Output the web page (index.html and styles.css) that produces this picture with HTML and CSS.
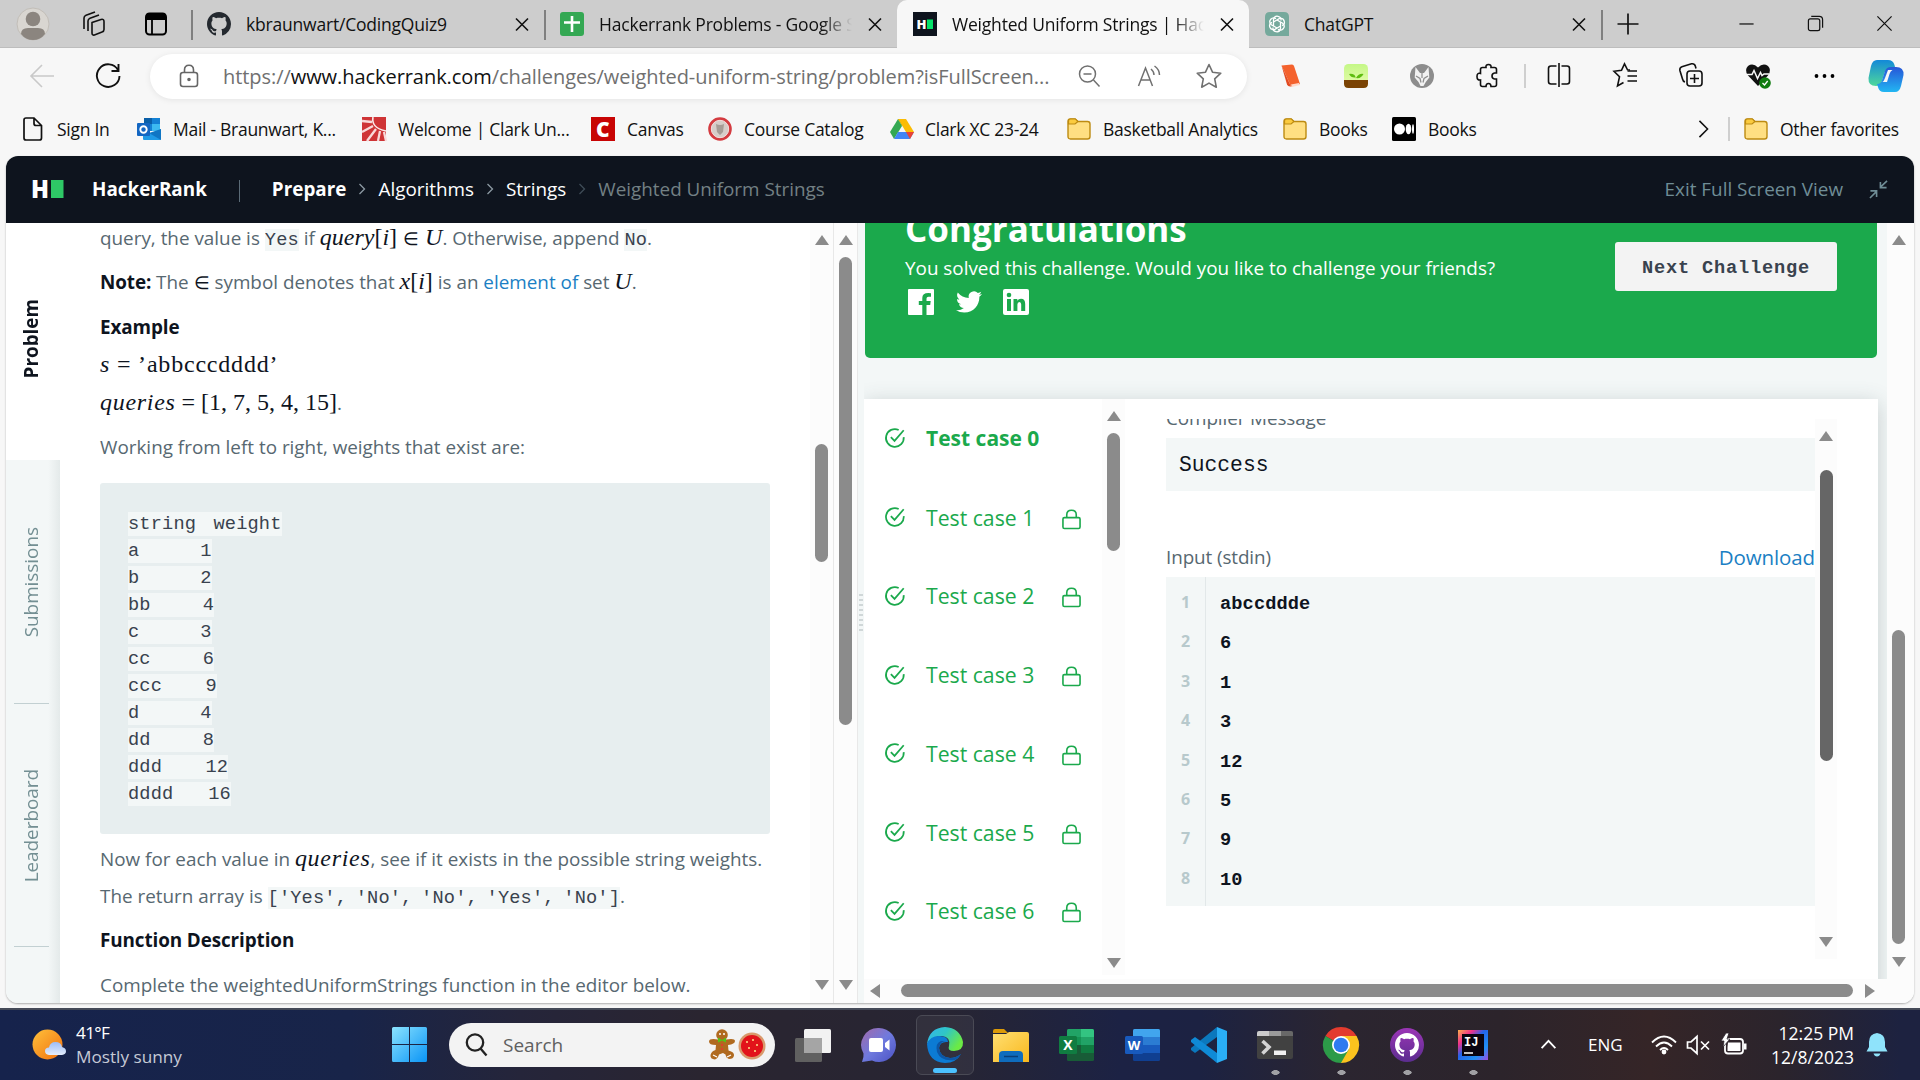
FILE: index.html
```html
<!DOCTYPE html>
<html lang="en">
<head>
<meta charset="utf-8">
<title>Weighted Uniform Strings | HackerRank</title>
<link rel="stylesheet" href="styles.css">
</head>
<body>
<svg class="defs" width="0" height="0">
  <defs>
    <linearGradient id="gWin" x1="0" y1="0" x2="1" y2="1"><stop offset="0" stop-color="#8be3ff"/><stop offset="1" stop-color="#0a94f5"/></linearGradient>
    <linearGradient id="gSun" x1="0" y1="0" x2="1" y2="1"><stop offset="0" stop-color="#ffc13b"/><stop offset="1" stop-color="#f0700f"/></linearGradient>
    <linearGradient id="gCloud" x1="0" y1="0" x2="0" y2="1"><stop offset="0" stop-color="#9dbdf5"/><stop offset="1" stop-color="#e3ecfc"/></linearGradient>
    <linearGradient id="gChat" x1="0" y1="0" x2="1" y2="1"><stop offset="0" stop-color="#a269a9"/><stop offset=".5" stop-color="#6f7ade"/><stop offset="1" stop-color="#4b52c4"/></linearGradient>
    <linearGradient id="gEdgeTop" x1="0" y1="0" x2="1" y2=".5"><stop offset="0" stop-color="#35b5ee"/><stop offset=".5" stop-color="#2fc6c6"/><stop offset="1" stop-color="#6bea45"/></linearGradient>
    <linearGradient id="gFolder" x1="0" y1="0" x2="1" y2="1"><stop offset="0" stop-color="#ffdf72"/><stop offset="1" stop-color="#f9b81d"/></linearGradient>
    <linearGradient id="gIj" x1="0" y1="0" x2="1" y2="1"><stop offset="0" stop-color="#fdb04a"/><stop offset=".25" stop-color="#f0318a"/><stop offset=".45" stop-color="#2563eb"/><stop offset=".75" stop-color="#1f8ff5"/><stop offset="1" stop-color="#a04be0"/></linearGradient>
    <linearGradient id="gCoA" x1="0" y1="0" x2="0" y2="1"><stop offset="0" stop-color="#1389d8"/><stop offset="1" stop-color="#4fd89b"/></linearGradient>
    <linearGradient id="gCoB" x1="0" y1="0" x2="0" y2="1"><stop offset="0" stop-color="#2756d8"/><stop offset="1" stop-color="#22b6f2"/></linearGradient>
    <linearGradient id="gPlant" x1="0" y1="0" x2="0" y2="1"><stop offset="0" stop-color="#c4f786"/><stop offset="1" stop-color="#eafcb0"/></linearGradient>
    <linearGradient id="gGh" x1="0" y1="0" x2="0" y2="1"><stop offset="0" stop-color="#9b35b6"/><stop offset="1" stop-color="#5b2d8f"/></linearGradient>
    <symbol id="octocat" viewBox="0 0 16 16"><path d="M8 0C3.58 0 0 3.58 0 8c0 3.54 2.29 6.53 5.47 7.59.4.07.55-.17.55-.38 0-.19-.01-.82-.01-1.49-2.01.37-2.53-.49-2.69-.94-.09-.23-.48-.94-.82-1.13-.28-.15-.68-.52-.01-.53.63-.01 1.08.58 1.23.82.72 1.21 1.87.87 2.33.66.07-.52.28-.87.51-1.07-1.78-.2-3.64-.89-3.64-3.95 0-.87.31-1.59.82-2.15-.08-.2-.36-1.02.08-2.12 0 0 .67-.21 2.2.82.64-.18 1.32-.27 2-.27.68 0 1.36.09 2 .27 1.53-1.04 2.2-.82 2.2-.82.44 1.1.16 1.92.08 2.12.51.56.82 1.27.82 2.15 0 3.07-1.87 3.75-3.65 3.95.29.25.54.73.54 1.48 0 1.07-.01 1.93-.01 2.2 0 .21.15.46.55.38A8.01 8.01 0 0 0 16 8c0-4.42-3.58-8-8-8z"/></symbol>
    <symbol id="close" viewBox="0 0 16 16"><path d="M2 2.500 14 14.500M14 2.500 2 14.500" fill="none" stroke="#111" stroke-width="1.600"/></symbol>
    <symbol id="folder" viewBox="0 0 24 24"><path d="M1 4.500Q1 2 3.500 2H8l3 2.500h9.500Q23 4.500 23 7v12.500Q23 22 20.500 22h-17Q1 22 1 19.500z" fill="#ffdf82" stroke="#bd8b12" stroke-width="1.400"/><path d="M1.500 7H8l3-2.500L8.500 2h-5Q1.500 2 1.500 4z" fill="#fbcb3f" stroke="#bd8b12" stroke-width="1.200"/></symbol>
    <symbol id="check" viewBox="0 0 24 24"><path d="M21.500 11A9.700 9.700 0 1 1 16 3.200M7.500 11l4 4.200L21.500 3.500" fill="none" stroke="#1ba94c" stroke-width="1.900"/></symbol>
    <symbol id="lock" viewBox="0 0 20 22"><path d="M2.500 9h15q1.500 0 1.500 1.500v8.500q0 1.500-1.500 1.500h-15Q1 20.500 1 19v-8.500Q1 9 2.500 9zM5 9V6Q5 1.300 10 1.300T15 6v3" fill="none" stroke="#1ba94c" stroke-width="1.700"/></symbol>
  </defs>
</svg>

<header class="tabs">
  <div class="tab-tools">
    <svg class="avatar" viewBox="0 0 34 34"><circle cx="17" cy="17" r="16" fill="#d9d6d1" stroke="#c2beb8"/><circle cx="17" cy="12" r="7.300" fill="#8b857f"/><path d="M5 27q0-6 7-6h10q7 0 7 6-4.500 6-12 6T5 27z" fill="#8b857f"/></svg>
    <svg class="i26" viewBox="0 0 26 26" fill="none" stroke="#111" stroke-width="1.600"><path d="M12 11.500l9-3q3-.8 3 2v8q0 2-2 2.500l-7.500 3q-2.500.5-2.500-2zM8 20V10q0-2 2-2.800L19 4M4 18V7q0-2 2-2.800L15 1"/></svg>
    <svg class="i26" viewBox="0 0 26 26"><rect x="3" y="2.500" width="20" height="21" rx="3.500" fill="none" stroke="#000" stroke-width="2"/><path d="M3 9V5q0-3 3-3h14q3 0 3 3v4z"/><path d="M9 8v15" stroke="#000" stroke-width="1.800"/></svg>
  </div>
  <div class="tab line"><svg class="i24" fill="#24292f"><use href="#octocat"/></svg><span>kbraunwart/CodingQuiz9</span><svg class="x"><use href="#close"/></svg></div>
  <div class="tab line"><svg class="i24" viewBox="0 0 24 24"><rect width="24" height="24" rx="3" fill="#34a853"/><path d="M12 4v16M4 10.500h16" stroke="#fff" stroke-width="2.600"/></svg><span class="fade">Hackerrank Problems - Google Sheets</span><svg class="x"><use href="#close"/></svg></div>
  <div class="tab active"><svg class="i24" viewBox="0 0 24 24"><rect width="24" height="24" fill="#0e141e"/><text x="3.500" y="17" font-size="13" font-weight="900" fill="#fff">H</text><rect x="14" y="7.500" width="6" height="9.500" fill="#05e36a"/></svg><span class="fade">Weighted Uniform Strings | HackerRank</span><svg class="x"><use href="#close"/></svg></div>
  <div class="tab"><svg class="i24" viewBox="0 0 24 24"><path d="M5 0h14q5 0 5 5v19H5q-5 0-5-5V5q0-5 5-5z" fill="#75a99c"/><g fill="none" stroke="#fff" stroke-width="1.300"><path d="M8.500 14V7.500Q9.500 3.500 13 4.300t3 4.200"/><path d="M8.500 14V7.500Q9.500 3.500 13 4.300t3 4.200" transform="rotate(60 12 12)"/><path d="M8.500 14V7.500Q9.500 3.500 13 4.300t3 4.200" transform="rotate(120 12 12)"/><path d="M8.500 14V7.500Q9.500 3.500 13 4.300t3 4.200" transform="rotate(180 12 12)"/><path d="M8.500 14V7.500Q9.500 3.500 13 4.300t3 4.200" transform="rotate(240 12 12)"/><path d="M8.500 14V7.500Q9.500 3.500 13 4.300t3 4.200" transform="rotate(300 12 12)"/></g></svg><span>ChatGPT</span><svg class="x"><use href="#close"/></svg></div>
  <div class="window-tools">
    <svg class="plus" viewBox="0 0 22 22" stroke="#111" stroke-width="1.700"><path d="M11 .5v21M.5 11h21"/></svg>
    <svg class="win" viewBox="0 0 18 18" stroke="#111" stroke-width="1.300"><path d="M1.500 9.500h15"/></svg>
    <svg class="win" viewBox="0 0 18 18" fill="none" stroke="#111" stroke-width="1.300"><rect x="1.500" y="4" width="12" height="12.500" rx="2"/><path d="M4.500 1.500H13q3.500 0 3.500 3.500v8.500"/></svg>
    <svg class="win" viewBox="0 0 18 18" stroke="#111" stroke-width="1.300"><path d="M1.500 1.500l15 15M16.500 1.500l-15 15"/></svg>
  </div>
</header>

<nav class="toolbar">
  <div class="nav-tools">
    <svg class="i26" viewBox="0 0 26 26" fill="none" stroke="#c9c9c9" stroke-width="1.600"><path d="M25 13H2M13 2L2 13l11 11"/></svg>
    <svg class="i26" viewBox="0 0 26 26" fill="none" stroke="#111" stroke-width="1.900"><path d="M23 7A11.300 11.300 0 1 0 24.500 13M23.500 1v7h-7"/></svg>
  </div>
  <div class="address">
    <svg class="padlock" viewBox="0 0 20 24" fill="none" stroke="#666" stroke-width="1.600"><rect x="1.500" y="8.500" width="17" height="14" rx="2.500"/><path d="M5.500 8.500V6Q5.500 1.300 10 1.300T14.500 6v2.500"/><circle cx="10" cy="15.500" r="1" fill="#666"/></svg>
    <span class="url">https://<b>www.hackerrank.com</b>/challenges/weighted-uniform-string/problem?isFullScreen...</span>
    <svg class="i24" viewBox="0 0 24 24" fill="none" stroke="#707070" stroke-width="1.500"><circle cx="10.500" cy="10" r="8"/><path d="M16.500 16l6 6.500M6.500 10h8"/></svg>
    <svg class="i24 read" viewBox="0 0 24 24" fill="none" stroke="#707070" stroke-width="1.500"><path d="M1.500 22L8.500 4l7 18M4 16h9M14 5q3 2.500 3 6M17.500 2q5 3.500 5 9"/></svg>
    <svg class="i26 star" viewBox="0 0 26 26" fill="none" stroke="#707070" stroke-width="1.600" stroke-linejoin="round"><path d="M13 1.500l3.500 7.700 8.300 1-6.100 5.700 1.600 8.300L13 20.100l-7.300 4.100 1.600-8.300-6.100-5.700 8.300-1z"/></svg>
  </div>
  <div class="ext four">
    <svg class="i24" viewBox="0 0 24 24"><path d="M3.500 1.500L14 .5q1.500 0 2 1.500l6 18-9 2.500z" fill="#f4622d"/><path d="M3.500 1.500l9.500 21q-3 .5-4-2z" fill="#e24b22"/><path d="M13 20.500l8-1.500.8 2-7.800 2z" fill="#ffd9ca"/></svg>
    <svg class="i24" viewBox="0 0 24 24"><rect width="24" height="24" rx="4.500" fill="url(#gPlant)"/><path d="M0 16h24v3.500Q24 24 19.500 24h-15Q0 24 0 19.500z" fill="#7b4304"/><path d="M12 16.500q0-4-1.500-5.500Q7.500 9 5 10q2 4 6.500 3.500M12 14q5 1 7.500-4-4.500-1-7.500 4z" fill="#5ebd10"/></svg>
    <svg class="i24" viewBox="0 0 24 24"><circle cx="12" cy="12" r="12" fill="#8d8d8d"/><path d="M5.500 3l4.500 6h4l4.500-6 .8 10.500-3.500 4.500L13.500 22h-3l-2-4L4.700 13.500z" fill="#f2f2f2"/><path d="M6 12l4 2.500 1 4M18 12l-4 2.500-1 4M12 9v5" stroke="#8d8d8d" fill="none" stroke-width="1.200"/></svg>
    <svg class="i24" viewBox="0 0 24 24" fill="none" stroke="#111" stroke-width="1.600"><path d="M6.500 3.500H10q-.5-3 2.500-3t2.500 3h3.500q2 0 2 2V9h-2q-2.500.5-2.500 3t2.500 3h2v5.500q0 2-2 2H15q0-3-2.500-3t-2.500 3H6.500q-2 0-2-2V16Q1 16.500 1 12.500T4.500 9.500V5.500q0-2 2-2z"/></svg>
  </div>
  <i class="rule"></i>
  <div class="ext">
    <svg class="i24" viewBox="0 0 24 24" fill="none" stroke="#111" stroke-width="1.600"><path d="M9.500 3H4Q1.500 3 1.500 5.500v13Q1.500 21 4 21h5.500M14.500 3H20q2.500 0 2.500 2.500v13Q22.500 21 20 21h-5.500M12 0v24"/></svg>
    <svg class="i24" viewBox="0 0 24 24" fill="none" stroke="#111" stroke-width="1.600"><path d="M17 7l-2.500-.2L11.500.8l-3 6.500-7.500 1 5.500 5.500L4.500 23l6-3.500M14.500 8H24M14.500 13H24M14.500 18H24"/></svg>
    <svg class="i24" viewBox="0 0 24 24" fill="none" stroke="#111" stroke-width="1.600"><rect x="8" y="8" width="15" height="15" rx="3"/><path d="M15.500 11v9M11 15.500h9M6 19Q4 18.500 3.500 16L.9 7.500q-.5-3 2-3.800L12.500.8q3-.5 3.800 2.200l.7 2.500"/></svg>
    <svg class="i26" viewBox="0 0 26 26"><path d="M13 23L3 12.500Q-1 7 3 3q5-3.500 10 1.500Q18 -.5 23 3q4 4 0 9.500z" fill="#111"/><path d="M2 11.500h5l2-4 3.500 8 3-6 1.500 3 2-1.500h5" fill="none" stroke="#f7f7f7" stroke-width="1.500"/><circle cx="20" cy="20" r="5.800" fill="#107c10"/><path d="M17.500 20l2 2 3.200-4" stroke="#fff" stroke-width="1.300" fill="none"/></svg>
    <svg class="i24" viewBox="0 0 24 24"><circle cx="3.500" cy="13" r="1.900"/><circle cx="11.500" cy="13" r="1.900"/><circle cx="19.500" cy="13" r="1.900"/></svg>
  </div>
  <svg class="copilot" viewBox="0 0 36 34"><path d="M9 1h11q5 0 6.500 5l1 4h-6q-4 0-5 4l-3 9q-1.500 4-5.500 4Q0 27 .5 19L3 7q1.500-6 6-6z" fill="url(#gCoA)"/><path d="M27 33H16q-5 0-6-5l-1-3q4 0 5-4l3-9q1.500-4 6-4h5q8 0 7.500 8L33 27q-1.500 6-6 6z" fill="url(#gCoB)"/><path d="M20 11h4.500q-2 1-3 4l-2.500 8h-4.500q1.500-1 2.500-4z" fill="#f7f7f7"/></svg>
</nav>

<nav class="favs">
  <a><svg class="i24" viewBox="0 0 24 24" fill="none" stroke="#111" stroke-width="1.700"><path d="M5 1h8l7.500 7.500V21q0 2-2 2H5q-2 0-2-2V3q0-2 2-2zM13 1v5.500q0 2 2 2h5.500"/></svg>Sign In</a>
  <a><svg class="i24" viewBox="0 0 24 24"><rect x="7" y="1" width="16" height="13" fill="#1481d4"/><path d="M7 1h8v6H7z" fill="#0a5fa8"/><path d="M15 7h8v7h-8z" fill="#3dbbf0"/><path d="M6 12l9 5 9-5v10q0 1-1 1H7q-1 0-1-1z" fill="#1f9ae6"/><path d="M24 12v11L12 16z" fill="#1076c4"/><rect y="6" width="13" height="13" rx="1" fill="#1366c2"/><circle cx="6.500" cy="12.500" r="3.200" fill="none" stroke="#fff" stroke-width="1.900"/></svg>Mail - Braunwart, K...</a>
  <a><svg class="i24" viewBox="0 0 24 24"><rect width="24" height="24" fill="#cf3436"/><path d="M11 0Q9 11 24 14" fill="none" stroke="#fbe9e9" stroke-width="1.600"/><path d="M10 5L0 4M11 9L0 15M14 12L5 24M18 14l-2 10M22 15l2 9" stroke="#f8dada" stroke-width="2.300"/></svg>Welcome | Clark Un...</a>
  <a><svg class="i24" viewBox="0 0 24 24"><rect width="24" height="24" fill="#c80404"/><text x="5" y="19.500" font-size="21" font-weight="800" fill="#fff">C</text></svg>Canvas</a>
  <a><svg class="i24" viewBox="0 0 24 24"><circle cx="12" cy="12" r="10.300" fill="#d6cdc9" stroke="#d43b40" stroke-width="3"/><circle cx="12" cy="12" r="8.700" fill="none" stroke="#f4dedd"/><path d="M8 7q4 2 8 0l-1 8-3 3-3-3z" fill="#a69c96"/></svg>Course Catalog</a>
  <a><svg class="i24 drive" viewBox="0 0 24 24"><path d="M8 2h8l-4 7z" fill="#188038"/><path d="M8 2l4 7-8 13-4-7z" fill="#34a853"/><path d="M16 2l8 13h-8L8 2z" fill="#fbbc04"/><path d="M4 22l4-7h16l-4 7z" fill="#4285f4"/><path d="M16 15h8l-4 7z" fill="#ea4335"/></svg>Clark XC 23-24</a>
  <a><svg class="i24"><use href="#folder"/></svg>Basketball Analytics</a>
  <a><svg class="i24"><use href="#folder"/></svg>Books</a>
  <a><svg class="i24" viewBox="0 0 24 24"><rect width="24" height="24" rx="1.500"/><circle cx="7.500" cy="12" r="5.500" fill="#fff"/><ellipse cx="16.500" cy="12" rx="2.800" ry="5.200" fill="#fff"/><ellipse cx="21" cy="12" rx="1" ry="4.700" fill="#fff"/></svg>Books</a>
  <svg class="more" viewBox="0 0 12 20" fill="none" stroke="#111" stroke-width="1.700"><path d="M1.500 1l9 9-9 9"/></svg>
  <i class="rule"></i>
  <a><svg class="i24"><use href="#folder"/></svg>Other favorites</a>
</nav>

<main class="page">
  <div class="crumbs">
    <svg class="logo" viewBox="0 0 32 20"><text x="-1" y="18.500" font-size="24" font-weight="800" fill="#fff" textLength="18" lengthAdjust="spacingAndGlyphs">H</text><rect x="19" y="1" width="12.500" height="18" fill="#2ec866"/></svg>
    <b class="brand">HackerRank</b>
    <i class="bar"></i>
    <b>Prepare</b>
    <svg class="sep" viewBox="0 0 8 12"><path d="M1.500 1l5 5-5 5"/></svg>
    <span>Algorithms</span>
    <svg class="sep" viewBox="0 0 8 12"><path d="M1.500 1l5 5-5 5"/></svg>
    <span>Strings</span>
    <svg class="sep dim" viewBox="0 0 8 12"><path d="M1.500 1l5 5-5 5"/></svg>
    <span class="current">Weighted Uniform Strings</span>
    <span class="exit">Exit Full Screen View</span>
    <svg class="shrink" viewBox="0 0 20 20" fill="none" stroke="#6f8d96" stroke-width="1.700"><path d="M19 1l-7 6.500M12 2v6h6.500M1 19l7-7M1.500 11.500H8V18"/></svg>
  </div>
  <div class="panes">
    <aside class="side">
      <div class="side-tab on"><span>Problem</span></div>
      <div class="side-tab"><span>Submissions</span></div>
      <div class="side-tab lead"><span>Leaderboard</span></div>
      <div class="side-rest"></div>
    </aside>
    <article class="problem">
      <p class="p-query">query, the value is <code>Yes</code> if <em class="m1">query<u>[</u>i<u>]</u> <u class="in">∈</u> U</em>. Otherwise, append <code>No</code>.</p>
      <p class="p-note"><b>Note:</b> The <em><u class="in">∈</u></em> symbol denotes that <em class="m2">x<u>[</u>i<u>]</u></em> is an <a>element of</a> set <em>U</em>.</p>
      <p class="p-ex"><b>Example</b></p>
      <p class="p-s"><em class="m3">s <u>= ’abbcccdddd’</u></em></p>
      <p class="p-q"><em class="m4"><span class="m5">queries</span> <u>= [1, 7, 5, 4, 15]</u></em>.</p>
      <p class="p-work">Working from left to right, weights that exist are:</p>
      <pre><code>string  weight</code>
<code>a       1</code>
<code>b       2</code>
<code>bb      4</code>
<code>c       3</code>
<code>cc      6</code>
<code>ccc     9</code>
<code>d       4</code>
<code>dd      8</code>
<code>ddd     12</code>
<code>dddd    16</code></pre>
      <p class="p-now">Now for each value in <em class="m5">queries</em>, see if it exists in the possible string weights.</p>
      <p class="p-ret">The return array is <code>['Yes', 'No', 'No', 'Yes', 'No']</code>.</p>
      <p class="p-fn"><b>Function Description</b></p>
      <p class="p-done">Complete the weightedUniformStrings function in the editor below.</p>
    </article>
    <div class="sb sb-a"><i class="up"></i><div class="track"><i class="thumb"></i></div><i class="down"></i></div>
    <div class="sb sb-b"><i class="up"></i><div class="track"><i class="thumb"></i></div><i class="down"></i></div>
    <div class="grip"><i></i></div>
    <section class="result">
      <div class="result-row">
        <div class="stack">
          <div class="banner">
            <div class="congrats">
              <h1>Congratulations</h1>
              <p>You solved this challenge. Would you like to challenge your friends?</p>
              <div class="social">
                <svg viewBox="0 0 26 26"><path fill-rule="evenodd" fill="#fff" d="M1 0h24q1 0 1 1v24q0 1-1 1h-6.500V16h3.700l.5-4h-4.200V9.500q0-1.800 2-1.800H23V4.200Q14.300 3 14.300 9v3h-3.500v4h3.500v10H1q-1 0-1-1V1q0-1 1-1z"/></svg>
                <svg viewBox="0 0 24 24"><path fill="#fff" d="M23.950 4.570a10 10 0 01-2.820.77 4.960 4.960 0 002.160-2.720c-.95.55-2 .95-3.130 1.180a4.920 4.920 0 00-8.380 4.480A13.930 13.930 0 011.640 3.160a4.920 4.920 0 001.520 6.570 4.900 4.900 0 01-2.230-.61v.06a4.920 4.920 0 003.950 4.830 5 5 0 01-2.210.08 4.940 4.940 0 004.600 3.420A9.870 9.870 0 010 19.540a14 14 0 007.550 2.210c9.050 0 14-7.500 14-13.980 0-.21 0-.42-.02-.63a9.940 9.940 0 002.460-2.550z"/></svg>
                <svg viewBox="0 0 26 26"><rect width="26" height="26" rx="2" fill="#fff"/><circle cx="6" cy="6" r="2.300" fill="#1ba94c"/><path d="M4 10h4v12H4zM10.500 10h3.800v1.700Q15.500 9.700 18 9.700q4.200 0 4.200 5.300v7h-4v-6.500q0-2.500-1.800-2.500-2 0-2 2.500V22h-3.900z" fill="#1ba94c"/></svg>
              </div>
            </div>
            <button class="next">Next Challenge</button>
          </div>
          <div class="card">
            <ul class="cases">
              <li class="on"><svg class="ck"><use href="#check"/></svg><span>Test case 0</span></li>
              <li><svg class="ck"><use href="#check"/></svg><span>Test case 1</span><svg class="lk"><use href="#lock"/></svg></li>
              <li><svg class="ck"><use href="#check"/></svg><span>Test case 2</span><svg class="lk"><use href="#lock"/></svg></li>
              <li><svg class="ck"><use href="#check"/></svg><span>Test case 3</span><svg class="lk"><use href="#lock"/></svg></li>
              <li><svg class="ck"><use href="#check"/></svg><span>Test case 4</span><svg class="lk"><use href="#lock"/></svg></li>
              <li><svg class="ck"><use href="#check"/></svg><span>Test case 5</span><svg class="lk"><use href="#lock"/></svg></li>
              <li><svg class="ck"><use href="#check"/></svg><span>Test case 6</span><svg class="lk"><use href="#lock"/></svg></li>
            </ul>
            <div class="sb sb-c"><i class="up"></i><div class="track"><i class="thumb"></i></div><i class="down"></i></div>
            <div class="output">
              <div class="label cut">Compiler Message</div>
              <div class="success">Success</div>
              <div class="label stdin"><span>Input (stdin)</span><a>Download</a></div>
              <div class="lines">
                <ol class="nums"><li>1</li><li>2</li><li>3</li><li>4</li><li>5</li><li>6</li><li>7</li><li>8</li></ol>
                <ol class="vals"><li>abccddde</li><li>6</li><li>1</li><li>3</li><li>12</li><li>5</li><li>9</li><li>10</li></ol>
              </div>
            </div>
            <div class="sb sb-d"><i class="up"></i><div class="track"><i class="thumb"></i></div><i class="down"></i></div>
          </div>
        </div>
        <div class="sb sb-e"><i class="up"></i><div class="track"><i class="thumb"></i></div><i class="down"></i></div>
      </div>
      <div class="hbar"><i class="left"></i><i class="hthumb"></i><i class="right"></i></div>
    </section>
  </div>
</main>

<footer class="taskbar">
  <div class="weather">
    <svg viewBox="0 0 34 32"><circle cx="15.500" cy="15.500" r="15" fill="url(#gSun)"/><path d="M17 26q-4-.5-4-4t4-3.500Q18 13 23.500 13T30 18q4 1 4 4.200T30 26z" fill="url(#gCloud)"/></svg>
    <div><span class="temp">41°F</span><span class="soft">Mostly sunny</span></div>
  </div>
  <svg class="start" viewBox="0 0 35 35" fill="url(#gWin)"><path d="M1.500 0H17v17H0V1.500Q0 0 1.500 0zM18 0h15.500Q35 0 35 1.500V17H18zM0 18h17v17H1.500Q0 35 0 33.500zM18 18h17v15.500q0 1.500-1.500 1.500H18z"/></svg>
  <div class="search">
    <svg class="i24" viewBox="0 0 24 24" fill="none" stroke="#222" stroke-width="2.300"><circle cx="10" cy="9.500" r="8.200"/><path d="M15.500 15.500L21.500 22.500"/></svg>
    <span>Search</span>
    <svg class="treats" viewBox="0 0 58 34"><g fill="#b06a20"><circle cx="13" cy="7" r="5.800"/><path d="M9 11.500h8q9-1.500 9 1.500t-7 4l.5 5.500q6 1.500 5.500 5t-5 3.500q-3-1-3.500-4.500l-2.500-1.500-4 1.500q-1 4-4 5-5-.5-4.500-4.500 1-4 5-5L7 17q-7 0-7-3.500T9 11.500z"/></g><circle cx="11" cy="6" r="1" fill="#fff"/><circle cx="15" cy="6" r="1" fill="#fff"/><path d="M9 9.500l4 2.500 4-2.500v5l-4-2-4 2z" fill="#53c41a"/><circle cx="13" cy="17" r="1" fill="#e33"/><circle cx="13" cy="21" r="1" fill="#e33"/><path d="M4 27l4 2M18 29l4-2" stroke="#fff" stroke-width="1.200"/><circle cx="43" cy="18" r="13.500" fill="#d99a6c"/><circle cx="43" cy="18" r="11" fill="#e2131a"/><g fill="#ffe28a"><circle cx="38" cy="14" r="1"/><circle cx="44" cy="12" r="1"/><circle cx="48" cy="17" r="1"/><circle cx="40" cy="20" r="1"/><circle cx="46" cy="23" r="1"/></g></svg>
  </div>
  <div class="apps">
    <div><svg viewBox="0 0 36 36"><rect x="0" y="11" width="27" height="24" rx="1.500" fill="#606060"/><rect x="9" y="2" width="27" height="24" rx="1.500" fill="#f2f2f2"/><rect x="9" y="11" width="18" height="15" fill="#a5a5a5"/></svg></div>
    <div><svg viewBox="0 0 36 36"><path d="M18 1a17 17 0 1 1-7 32.500L1 35q2-5 1.500-8.500A17 17 0 0 1 18 1z" fill="url(#gChat)"/><rect x="8" y="11" width="14" height="14" rx="2" fill="#fff"/><path d="M24 16l4.500-3.500v11L24 20z" fill="#fff"/></svg></div>
    <div class="sel"><svg viewBox="0 0 36 36"><path d="M18 0Q33 1 36 15q.5 8.500-9 9-7 0-5-5Q24 10 15 9 5 9 0 17 2 1 18 0z" fill="url(#gEdgeTop)"/><path d="M0 17Q3 9 12 9q9 0 9 6-8-1-9 6 1 9 11 10 6 0 11-4-5 9-16 9Q1 35 0 17z" fill="#0c7bd4"/><path d="M21 14q-8-1-9 7 1 9 11 10 6 0 11-4-2 4-6 6-14 2-18-8-2-9 4-11z" fill="#0d56a6"/></svg></div>
    <div><svg viewBox="0 0 36 36"><path d="M0 4q0-2 2-2h9l4 4H0z" fill="#dc9a08"/><path d="M0 7h13l3-2h18q2 0 2 2v28H0z" fill="url(#gFolder)"/><path d="M6 35v-7q0-4 4-4h16q4 0 4 4v7z" fill="#0f6cbd"/><path d="M11 29.500h14" stroke="#0a3f78" stroke-width="1.500"/></svg></div>
    <div><svg viewBox="0 0 36 36"><rect x="8" y="2" width="27" height="32" rx="1.500" fill="#185c37"/><path d="M8 3.500Q8 2 9.500 2H22v8H8z" fill="#21a366"/><path d="M22 2h11.500Q35 2 35 3.500V10H22z" fill="#33c481"/><path d="M8 10h14v8H8z" fill="#159354"/><path d="M22 10h13v8H22z" fill="#21a366"/><path d="M22 18h13v8H22z" fill="#107c41"/><rect y="9" width="18" height="18" rx="1.500" fill="#107c41"/><text x="9" y="23" text-anchor="middle" font-size="14" font-weight="700" fill="#fff">X</text></svg></div>
    <div><svg viewBox="0 0 36 36"><rect x="8" y="2" width="27" height="32" rx="1.500" fill="#103f91"/><path d="M8 3.500Q8 2 9.500 2h24Q35 2 35 3.500V10H8z" fill="#41a5ee"/><path d="M8 10h27v8H8z" fill="#2b7cd3"/><path d="M8 18h27v8H8z" fill="#185abd"/><rect y="9" width="18" height="18" rx="1.500" fill="#185abd"/><text x="9" y="23" text-anchor="middle" font-size="13" font-weight="700" fill="#fff">W</text></svg></div>
    <div><svg viewBox="0 0 36 36"><path d="M26 0l10 4v28l-10 4z" fill="#2aaef5"/><path d="M26 0v10L4 26 0 23v-2z" fill="#0b78bd"/><path d="M26 36V26L4 10l-4 3v2z" fill="#0f8ad6"/></svg></div>
    <div class="run"><svg viewBox="0 0 36 36"><rect y="4" width="36" height="28" rx="2" fill="#414141"/><path d="M0 9V6q0-2 2-2h10v5z" fill="#ccc"/><path d="M12 4h12v5H12z" fill="#9b9b9b"/><path d="M24 4h10q2 0 2 2v3H24z" fill="#686868"/><path d="M5.500 14l6.500 6-6.500 6.500" fill="none" stroke="#d4d4d4" stroke-width="3.600"/><rect x="17" y="23.500" width="12" height="4.500" fill="#f0f0f0"/></svg></div>
    <div class="run"><svg viewBox="0 0 36 36"><path d="M18 18L2.400 9A18 18 0 0 1 33.600 9z" fill="#e33b2e"/><path d="M18 18L33.600 9A18 18 0 0 1 18 36z" fill="#fcc31e"/><path d="M18 18l0 18A18 18 0 0 1 2.400 9z" fill="#2c9b48"/><path d="M18 9h15.600L26 22z" fill="#fcc31e"/><path d="M26 22L18 36l-5-9z" fill="#2c9b48"/><circle cx="18" cy="18" r="9" fill="#fff"/><circle cx="18" cy="18" r="7.300" fill="#2f7bf0"/></svg></div>
    <div class="run"><svg viewBox="0 0 36 36"><circle cx="18" cy="18" r="17" fill="url(#gGh)"/><use href="#octocat" x="6" y="6" width="24" height="24" fill="#fff"/></svg></div>
    <div class="run"><svg viewBox="0 0 36 36"><rect x="3" y="3" width="30" height="30" fill="url(#gIj)"/><rect x="7" y="7" width="22" height="22" fill="#0a0410"/><text x="9" y="19" font-size="12" font-weight="700" font-family="Liberation Mono" fill="#fff">IJ</text><path d="M9 26h9" stroke="#fff" stroke-width="1.500"/></svg></div>
  </div>
  <svg class="chev" viewBox="0 0 18 12" fill="none" stroke="#fff" stroke-width="2"><path d="M1.500 10L9 2l7.500 8"/></svg>
  <span class="lang">ENG</span>
  <div class="status">
    <svg viewBox="0 0 26 20" fill="none" stroke="#fff" stroke-width="1.800"><path d="M1 7.500Q13-4.500 25 7.500M5 11.500q8-8 16 0M9 15q4-4 8 0"/><circle cx="13" cy="17" r="1.500" fill="#fff"/></svg>
    <svg viewBox="0 0 26 20" fill="none" stroke="#fff" stroke-width="1.700"><path d="M1.500 7H5l6-5.500v17L5 13H1.500zM15 6.500l8 8M23 6.500l-8 8"/></svg>
    <svg viewBox="0 0 26 20"><rect x="4" y="4" width="18" height="14.500" rx="3" fill="none" stroke="#fff" stroke-width="1.800"/><path d="M7 7.500h12.500V16H6.500v-4zM23 8.500h2.500v6H23z" fill="#fff"/><path d="M5-2L0 6h3l-1 6 7-8H6l2-6z" fill="#fff" stroke="#2b242c" stroke-width=".8"/></svg>
  </div>
  <div class="clock"><span>12:25 PM</span><span>12/8/2023</span></div>
  <svg class="bell" viewBox="0 0 22 24" fill="#8fe3fb"><path d="M11 0q8 1 8 9v5l2.500 4.500H.5L3 14V9q0-8 8-9zM7.500 20.500h7q-1 3-3.500 3t-3.500-3z"/></svg>
</footer>
</body>
</html>
```
FILE: styles.css
```css
* { box-sizing: border-box; }
body {
  margin: 0; width: 1920px; height: 1080px; overflow: hidden;
  display: flex; flex-direction: column;
  background: #f7f7f7; color: #111;
  font-family: "Open Sans", "Noto Sans", sans-serif; font-size: 17.500px; white-space: nowrap;
}
svg { display: block; flex: none; overflow: visible; }
.defs { position: absolute; }
i, em { font-style: normal; }
ul, ol { list-style: none; margin: 0; padding: 0; }
.i24 { width: 24px; height: 24px; }
.i26 { width: 26px; height: 26px; }

/* tab strip */
.tabs { height: 48px; display: flex; background: #cdcdcd; border-bottom: 1px solid #bdbdbd; flex: none; }
.tab-tools { flex: none; width: 191px; padding-left: 16px; display: flex; align-items: center; }
.tab-tools .avatar { width: 34px; height: 34px; margin-right: 30px; }
.tab-tools .i26 + .i26 { margin-left: 37px; }
.tab { flex: none; width: 352px; padding: 0 14px 0 16px; display: flex; align-items: center; gap: 15px; height: 48px; }
.tab span { flex: 1; overflow: hidden; letter-spacing: -.2px; }
.tab .x { width: 16px; height: 16px; }
.line { width: 353px; background: linear-gradient(#808080, #808080) 0 10px / 2px 30px no-repeat; }
.fade { mask-image: linear-gradient(90deg, #000 88%, transparent 100%); }
.active { background: #f7f7f7; border-radius: 10px 10px 0 0; width: 352px; }
.window-tools { flex: 1; display: flex; align-items: center; background: linear-gradient(#808080, #808080) 0 10px / 2px 30px no-repeat; padding-left: 16px; }
.plus { width: 22px; height: 22px; margin-right: 99px; }
.win { width: 17px; height: 17px; margin-right: 52px; }

/* toolbar */
.toolbar { height: 56px; display: flex; align-items: center; flex: none; }
.nav-tools { flex: none; width: 150px; padding-left: 29px; display: flex; gap: 40px; }
.address { flex: none; width: 1097px; height: 45px; border-radius: 23px; background: #fff; box-shadow: 0 1px 6px rgba(0,0,0,.08); display: flex; align-items: center; padding-left: 29px; }
.padlock { width: 20px; height: 24px; }
.url { flex: none; width: 878px; padding-left: 24px; font-size: 20px; letter-spacing: -.060px; color: #707070; }
.url b { font-weight: 400; color: #111; }
.read { margin-left: 36px; }
.star { margin-left: 35px; }
.ext { flex: none; display: flex; width: 332px; }
.ext.four { width: 264px; margin: 0 3px 0 10px; }
.ext svg { margin: 0 auto; }
.rule { flex: none; width: 2px; height: 24px; background: #cfcfcf; }
.copilot { width: 36px; height: 34px; margin-left: 10px; }

/* favourites */
.favs { height: 52px; display: grid; align-items: center; flex: none; padding: 0 0 2px 21px;
  grid-template-columns: 116px 225px 229px 117px 182px 177px 216px 109px 306px 30px 16px 1fr; }
.favs a { display: flex; align-items: center; gap: 12px; letter-spacing: -.280px; }
.favs .more { width: 11px; height: 18px; }
.favs .drive { margin-right: -1px; }

/* page frame */
.page { margin: 0 6px; height: 847px; flex: none; border-radius: 12px; overflow: hidden; background: #fff; box-shadow: 0 1px 2px rgba(0,0,0,.3); display: flex; flex-direction: column; }
.crumbs { height: 67px; flex: none; background: #0e141e; color: #fff; display: flex; align-items: center; padding: 0 26px 1px 26px; font-size: 18.880px; }
.logo { width: 32px; height: 20px; margin-right: 28px; }
.bar { width: 1px; height: 22px; background: #5b6b77; margin: 3px 32px 0 32px; }
.sep { width: 8px; height: 12px; margin: 0 12px; fill: none; stroke: #8d9aa3; stroke-width: 1.300; }
.dim { stroke: #3f4c57; }
.current { color: #738084; }
.exit { margin-left: auto; color: #6f8d96; }
.shrink { width: 19px; height: 19px; margin-left: 26px; }
.panes { flex: 1; display: flex; min-height: 0; }

/* side tabs */
.side { flex: none; width: 54px; display: flex; flex-direction: column; }
.side-tab { flex: none; height: 244px; display: flex; align-items: center; justify-content: center; position: relative; background: linear-gradient(90deg, #f3f7f7 78%, #e4eaea); color: #738f93; font-size: 18.880px; }
.side-tab span { writing-mode: vertical-rl; transform: rotate(180deg); margin-right: 5px; }
.side-tab.on { height: 237px; background: #fff; color: #0e141e; font-weight: 700; padding-bottom: 6px; }
.side-tab:not(.on)::after { content: ""; position: absolute; left: 8px; right: 11px; bottom: 0; height: 1px; background: #c2d0d2; }
.side-tab.lead { height: 243px; }
.side-rest { flex: 1; background: linear-gradient(90deg, #f3f7f7 78%, #e4eaea); }

/* statement */
.problem { flex: none; width: 750px; padding-left: 40px; overflow: hidden; color: #576871; font-size: 18.880px; }
.problem p { margin: 0; height: 28px; line-height: 28px; }
.problem b { color: #0e141e; font-weight: 700; letter-spacing: -.100px; }
.problem a, .output a { color: #1b7fc4; }
.problem code { font: 18.670px "Liberation Mono", monospace; letter-spacing: .150px; word-spacing: -2.650px; color: #39424e; background: #f3f7f7; }
.problem em { font: italic 24px/20px "Liberation Serif", serif; color: #0e141e; }
.problem u { font-style: normal; text-decoration: none; }
.problem .in { font-size: 18px; }
.problem .m3 { letter-spacing: .800px; }
.problem .m5 { letter-spacing: .700px; }
.problem .p-query { margin-top: 1px; }
.problem .p-note { margin-top: 16px; }
.problem .p-ex { margin-top: 17px; }
.problem .p-s { margin-top: 10px; }
.problem .p-q { margin-top: 10px; }
.problem .p-work { margin-top: 16px; }
.problem pre { margin: 22px 0 0; width: 670px; height: 351px; padding: 26px 28px; background: #e7eeef; border-radius: 3px; line-height: 27px; font-size: 18.670px; }
.problem pre code { padding: 1px 0; }
.problem .p-now { margin-top: 11px; }
.problem .p-ret { margin-top: 9px; }
.problem .p-fn { margin-top: 16px; }
.problem .p-done { margin-top: 17px; }

/* scrollbars */
.sb { display: flex; flex-direction: column; align-items: center; background: #fcfcfc; flex: none; }
.sb .track { flex: 1; }
.sb .thumb { display: block; width: 13px; border-radius: 7px; background: #8b8b8b; }
.up, .down { border: 7px solid transparent; width: 0; height: 0; }
.up { border-top: 0; border-bottom: 10px solid #8b8b8b; }
.down { border-bottom: 0; border-top: 10px solid #8b8b8b; }
.sb-a, .sb-b { width: 24px; padding: 12px 0 13px; border-right: 1px solid #e8e8e8; }
.sb-a .thumb { margin-top: 199px; height: 118px; }
.sb-b .thumb { margin-top: 12px; height: 468px; }
.grip { flex: none; width: 6px; background: #f3f7f7; display: flex; align-items: center; }
.grip i { width: 4px; height: 39px; margin-left: 1px; background: repeating-linear-gradient(#d0d7d8 0 2px, transparent 2px 5px); }

/* result side */
.result { flex: 1; display: flex; flex-direction: column; min-width: 0; background: #f3f7f7; }
.result-row { height: 756px; display: flex; overflow: hidden; }
.stack { width: 1023px; flex: none; overflow: hidden; }
.banner { margin-left: 1px; width: 1012px; height: 135px; background: #1ba94c; border-radius: 0 0 5px 5px; color: #fff; display: flex; overflow: hidden; }
.congrats { width: 750px; padding-left: 40px; }
.congrats h1 { margin: -18px 0 0; font-size: 35px; line-height: 48px; }
.congrats p { margin: 2px 0 0; font-size: 18.880px; line-height: 26px; }
.social { display: flex; align-items: center; margin: 8px 0 0 3px; gap: 21.500px; }
.social svg { width: 26px; height: 26px; }
.next { width: 222px; height: 49px; margin-top: 19px; padding-top: 3px; border: 0; border-radius: 3px; background: #f3f3f3; color: #39424e; font: bold 18.670px "Liberation Mono", monospace; letter-spacing: .8px; }
.card { margin-top: 41px; width: 1014px; height: 600px; background: #fff; box-shadow: 0 4px 20px rgba(60,80,85,.24); display: flex; align-items: flex-start; }
.cases { width: 238px; }
.cases li { height: 78.750px; display: flex; align-items: center; padding-left: 20px; color: #1ba94c; font-size: 21.200px; }
.cases .on { font-weight: 700; font-size: 21px; }
.cases span { width: 136px; margin-left: 20px; }
.ck { width: 22px; height: 22px; }
.lk { width: 19px; height: 21px; margin-top: 4px; }
.sb-c { width: 23px; height: 576px; padding: 12px 0 7px; }
.sb-c .thumb { margin-top: 12px; height: 118px; }
.output { margin: 20px 0 0 41px; width: 649px; height: 540px; overflow: hidden; }
.label { color: #576871; font-size: 18.880px; line-height: 26px; letter-spacing: -.100px; }
.cut { margin-top: -14px; }
.success { margin-top: 7px; height: 53px; background: #f3f7f7; padding-left: 13px; font: 21.300px/55px "Liberation Mono", monospace; color: #0e141e; }
.stdin { margin-top: 53px; display: flex; justify-content: space-between; }
.stdin a { font-size: 20.500px; }
.lines { margin-top: 7px; height: 329px; background: #f3f7f7; display: flex; }
.lines li { height: 39.400px; line-height: 39.400px; }
.nums { width: 40px; padding-top: 6px; text-align: center; border-right: 1px solid #e2e8e9; font-size: 16px; font-weight: 700; color: #b7c9cc; }
.vals { padding: 8px 0 0 14px; font: bold 18.670px "Liberation Mono", monospace; letter-spacing: .100px; color: #0e141e; }
.sb-d { width: 22px; height: 540px; margin-top: 20px; padding: 12px 0; }
.sb-d .thumb { margin-top: 29px; height: 291px; background: #666; }
.sb-e { width: 27px; padding: 12px 4px 12px 0; }
.sb-e .thumb { margin-top: 385px; height: 314px; }
.hbar { flex: 1; background: #fcfcfc; display: flex; align-items: center; padding-left: 6px; padding-bottom: 1px; }
.left, .right { border: 7px solid transparent; }
.left { border-left: 0; border-right: 10px solid #8b8b8b; }
.right { border-right: 0; border-left: 10px solid #8b8b8b; margin-left: 12px; }
.hthumb { width: 952px; height: 13px; border-radius: 7px; background: #8b8b8b; margin-left: 21px; }

/* taskbar */
.taskbar { margin-top: 5px; height: 72px; flex: none; display: flex; align-items: center; color: #fff; border-top: 2px solid #454a58; padding-bottom: 1px;
  background: linear-gradient(90deg, #16234c 0, #182449 350px, #25253a 520px, #2a2530 700px, #272533 950px, #1c2244 1120px, #1c2242 1200px, #2b2530 1340px, #2c242b 1500px, #352527 1650px, #2b242c 1780px, #1d2240 1900px); }
.weather { flex: none; width: 392px; padding-left: 32px; display: flex; align-items: center; gap: 10px; font-size: 17.200px; line-height: 24px; }
.weather svg { width: 34px; height: 32px; }
.weather span { display: block; }
.weather .temp { letter-spacing: -.700px; }
.weather .soft { color: #c6cad6; }
.start { width: 35px; height: 35px; }
.search { flex: none; width: 326px; height: 44px; margin-left: 22px; border-radius: 22px; background: #f3f3f3; color: #606060; display: flex; align-items: center; padding-left: 16px; font-size: 19px; }
.search span { margin-left: 14px; flex: 1; }
.treats { width: 58px; height: 34px; margin-right: 8px; }
.apps { flex: none; display: flex; margin-left: 5px; }
.apps div { width: 66px; height: 66px; display: flex; align-items: center; justify-content: center; background: no-repeat center 58px / 9px 5px; }
.apps svg { width: 36px; height: 36px; }
.apps .run { background-image: radial-gradient(closest-side, #a0a0a4 85%, transparent); }
.apps .sel { position: relative; }
.apps .sel::before { content: ""; position: absolute; inset: 3px 4px; border-radius: 6px; border: 1px solid #4a4a55; background: rgba(255,255,255,.05); }
.apps .sel::after { content: ""; position: absolute; left: 21px; bottom: 5px; width: 24px; height: 5px; border-radius: 3px; background: #4cc2ff; }
.sel svg { position: relative; }
.chev { width: 17px; height: 11px; margin-left: 34px; }
.lang { flex: none; width: 63px; margin-left: 31px; font-size: 17px; }
.status { flex: none; display: flex; gap: 9px; }
.status svg { width: 26px; height: 20px; }
.clock { flex: none; width: 107px; text-align: right; font-size: 17.500px; line-height: 24px; }
.clock span { display: block; }
.bell { width: 22px; height: 24px; margin-left: 12px; }
```
